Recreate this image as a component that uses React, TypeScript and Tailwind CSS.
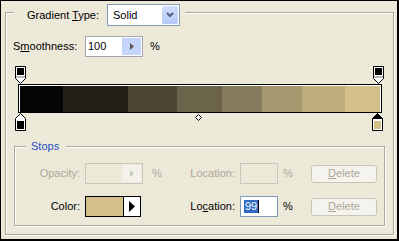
const bands = [
  { w: 43, c: '#050505' },
  { w: 65, c: '#23201a' },
  { w: 49, c: '#4a4535' },
  { w: 45, c: '#6b634a' },
  { w: 40, c: '#877c5d' },
  { w: 40, c: '#a69970' },
  { w: 43, c: '#bead7c' },
  { w: 35, c: '#d3c089' },
]

function TopStop() {
  return (
    <svg width="11" height="18" viewBox="0 0 11 18" className="block">
      <path d="M0.5 0.5H10.5V12.5L5.5 17.5L0.5 12.5Z" fill="#fff" stroke="#000" />
      <rect x="2" y="2" width="7" height="7" fill="#000" />
      <rect x="1" y="10" width="9" height="2" fill="#b8b8b8" />
    </svg>
  )
}

function BottomStop({ color, selected }: { color: string; selected?: boolean }) {
  return (
    <svg width="11" height="18" viewBox="0 0 11 18" className="block">
      <path d="M5.5 0.5L10.5 5.5V17.5H0.5V5.5Z" fill="#fff" stroke="#000" />
      {selected && <path d="M5.5 0.5L10.5 5.5H0.5Z" fill="#000" stroke="#000" />}
      <rect x="2" y="8" width="7" height="8" fill={color} />
    </svg>
  )
}

function SpinArrow({ fill }: { fill: string }) {
  return (
    <svg width="4" height="7" viewBox="0 0 4 7">
      <path d="M0 0L4 3.5L0 7Z" fill={fill} />
    </svg>
  )
}

function DeleteButton() {
  return (
    <div className="w-[66px] h-[18px] rounded-[3px] border border-[#c9c7ba] bg-[#f4f3ee] text-[#aca899] flex items-center justify-center">
      <span className="underline">D</span>elete
    </div>
  )
}

export default function App() {
  return (
    <div className="w-[399px] h-[241px] overflow-hidden bg-[#ece9d8] border-t border-l border-r-2 border-b-2 border-black pl-[4px] pt-[11px] font-['Liberation_Sans',Arial,sans-serif] text-[11px] leading-[13px] text-black">
      <div className="w-[389px] h-[223px] border border-[#aca899] shadow-[inset_1px_1px_0_#fff,1px_1px_0_#fff]">
        {/* legend: gradient type */}
        <div className="-mt-[9px] ml-[8px] w-fit h-[22px] flex items-center gap-[8px] bg-[#ece9d8] pl-[13px] pr-[5px]">
          <span>
            Gradient <span className="underline">T</span>ype:
          </span>
          <div className="w-[73px] h-[22px] border border-[#7f9db9] bg-white flex items-center p-[1px]">
            <span className="flex-1 pl-[4px]">Solid</span>
            <div className="w-[16px] h-full rounded-[2px] bg-gradient-to-b from-[#d2defc] to-[#b4c8f8] flex items-center justify-center">
              <svg width="8" height="6" viewBox="0 0 8 6">
                <path d="M1 1L4 4L7 1" fill="none" stroke="#4d6185" strokeWidth="2" />
              </svg>
            </div>
          </div>
        </div>

        {/* smoothness */}
        <div className="mt-[10px] ml-[7px] h-[21px] flex items-center">
          <span className="w-[72px]">
            S<span className="underline">m</span>oothness:
          </span>
          <div className="w-[58px] h-[21px] border border-[#a0a8ae] bg-white flex">
            <span className="flex-1 pl-[2px] flex items-center">100</span>
            <div className="w-[19px] my-[1px] mr-[1px] bg-[#c4d4fb] flex items-center justify-center">
              <SpinArrow fill="#5b5a48" />
            </div>
          </div>
          <span className="ml-[7px]">%</span>
        </div>

        {/* gradient bar with stops */}
        <div className="relative mt-[9px] h-[65px] pt-[18px]">
          <div className="ml-[12px] w-[364px] h-[29px] border border-black bg-white pl-[1px] pt-[1px] flex">
            {bands.map((b, i) => (
              <div key={i} className="h-full" style={{ width: b.w, background: b.c }} />
            ))}
          </div>
          <div className="absolute left-[9px] top-0">
            <TopStop />
          </div>
          <div className="absolute left-[367px] top-0">
            <TopStop />
          </div>
          <div className="absolute left-[9px] top-[47px]">
            <BottomStop color="#000" />
          </div>
          <div className="absolute left-[366px] top-[47px]">
            <BottomStop color="#d3bf87" selected />
          </div>
          <svg width="7" height="7" viewBox="0 0 7 7" className="absolute left-[189px] top-[48px]">
            <path d="M3.5 0.5L6.5 3.5L3.5 6.5L0.5 3.5Z" fill="#fff" stroke="#000" />
          </svg>
        </div>

        {/* stops group */}
        <div className="mt-[15px] ml-[8px] w-[371px] h-[80px] border border-[#aca899] shadow-[inset_1px_1px_0_#fff,1px_1px_0_#fff]">
          <div className="-mt-[7px] ml-[11px] w-fit h-[13px] bg-[#ece9d8] pl-[5px] pr-[7px] text-[#1c4fcb]">Stops</div>

          <div className="mt-[10px] h-[21px] flex items-center text-[#aca899]">
            <span className="w-[65px] text-right">Opacity:</span>
            <div className="ml-[5px] w-[58px] h-[21px] border border-[#c9c7ba] flex">
              <span className="flex-1" />
              <div className="w-[19px] my-[1px] mr-[1px] bg-[#f3f2ea] flex items-center justify-center">
                <SpinArrow fill="#c9c7ba" />
              </div>
            </div>
            <span className="ml-[9px] w-[20px]">%</span>
            <span className="w-[63px] text-right">Location:</span>
            <div className="ml-[5px] w-[38px] h-[21px] border border-[#c9c7ba]" />
            <span className="ml-[5px] w-[28px]">%</span>
            <DeleteButton />
          </div>

          <div className="mt-[12px] h-[21px] flex items-center">
            <span className="w-[65px] text-right">Color:</span>
            <div className="ml-[5px] w-[56px] h-[21px] border border-black flex">
              <div className="flex-1 bg-[#d3bf87]" />
              <div className="w-[17px] border-l border-black bg-white flex items-center justify-center">
                <svg width="6" height="11" viewBox="0 0 6 11">
                  <path d="M0 0L6 5.5L0 11Z" fill="#000" />
                </svg>
              </div>
            </div>
            <span className="w-[31px]" />
            <span className="w-[63px] text-right">
              Lo<span className="underline">c</span>ation:
            </span>
            <div className="ml-[5px] w-[38px] h-[21px] border border-[#7f9db9] bg-white flex items-center pl-[3px]">
              <span className="bg-[#316ac5] text-white px-[1px]">99</span>
              <span className="w-[1px] h-[13px] bg-black" />
            </div>
            <span className="ml-[5px] w-[28px]">%</span>
            <DeleteButton />
          </div>
        </div>
      </div>
    </div>
  )
}
